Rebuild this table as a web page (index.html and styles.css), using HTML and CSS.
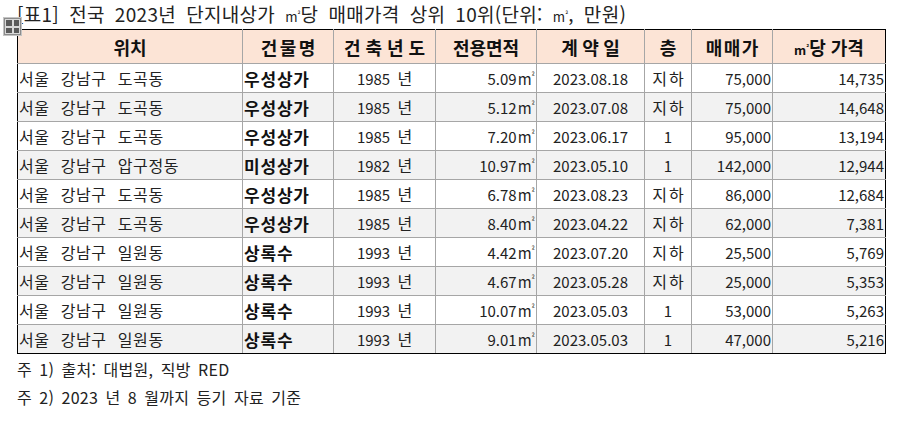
FILE: index.html
```html
<!DOCTYPE html>
<html lang="ko">
<head>
<meta charset="utf-8">
<link rel="stylesheet" href="styles.css">
</head>
<body>
<div class="page">
  <div class="title">[표1] 전국 2023년 단지내상가 <span class="unit">m<span class="sq">²</span></span>당 매매가격 상위 10위(단위: <span class="unit">m<span class="sq">²</span></span>, 만원)</div>
  <div class="table-wrap">
    <span class="handle"><i></i><i></i><i></i><i></i></span>
    <table class="data">
      <colgroup>
        <col class="c1"><col class="c2"><col class="c3"><col class="c4"><col class="c5"><col class="c6"><col class="c7"><col class="c8">
      </colgroup>
      <thead>
        <tr><th>위치</th><th class="s2">건물명</th><th class="s6">건축년도</th><th>전용면적</th><th class="s5">계약일</th><th>층</th><th class="s1">매매가</th><th><span class="hunit">m<span class="sq">²</span></span>당 가격</th></tr>
      </thead>
      <tbody>
        <tr><td class="l">서울 강남구 도곡동</td><td class="b">우성상가</td><td class="c">1985 <span class="k">년</span></td><td class="r">5.09<span class="dunit">m<span class="sq">²</span></span></td><td class="c">2023.08.18</td><td class="c k">지하</td><td class="r">75,000</td><td class="r">14,735</td></tr>
        <tr class="alt"><td class="l">서울 강남구 도곡동</td><td class="b">우성상가</td><td class="c">1985 <span class="k">년</span></td><td class="r">5.12<span class="dunit">m<span class="sq">²</span></span></td><td class="c">2023.07.08</td><td class="c k">지하</td><td class="r">75,000</td><td class="r">14,648</td></tr>
        <tr><td class="l">서울 강남구 도곡동</td><td class="b">우성상가</td><td class="c">1985 <span class="k">년</span></td><td class="r">7.20<span class="dunit">m<span class="sq">²</span></span></td><td class="c">2023.06.17</td><td class="c">1</td><td class="r">95,000</td><td class="r">13,194</td></tr>
        <tr class="alt"><td class="l">서울 강남구 압구정동</td><td class="b">미성상가</td><td class="c">1982 <span class="k">년</span></td><td class="r">10.97<span class="dunit">m<span class="sq">²</span></span></td><td class="c">2023.05.10</td><td class="c">1</td><td class="r">142,000</td><td class="r">12,944</td></tr>
        <tr><td class="l">서울 강남구 도곡동</td><td class="b">우성상가</td><td class="c">1985 <span class="k">년</span></td><td class="r">6.78<span class="dunit">m<span class="sq">²</span></span></td><td class="c">2023.08.23</td><td class="c k">지하</td><td class="r">86,000</td><td class="r">12,684</td></tr>
        <tr class="alt"><td class="l">서울 강남구 도곡동</td><td class="b">우성상가</td><td class="c">1985 <span class="k">년</span></td><td class="r">8.40<span class="dunit">m<span class="sq">²</span></span></td><td class="c">2023.04.22</td><td class="c k">지하</td><td class="r">62,000</td><td class="r">7,381</td></tr>
        <tr><td class="l">서울 강남구 일원동</td><td class="b">상록수</td><td class="c">1993 <span class="k">년</span></td><td class="r">4.42<span class="dunit">m<span class="sq">²</span></span></td><td class="c">2023.07.20</td><td class="c k">지하</td><td class="r">25,500</td><td class="r">5,769</td></tr>
        <tr class="alt"><td class="l">서울 강남구 일원동</td><td class="b">상록수</td><td class="c">1993 <span class="k">년</span></td><td class="r">4.67<span class="dunit">m<span class="sq">²</span></span></td><td class="c">2023.05.28</td><td class="c k">지하</td><td class="r">25,000</td><td class="r">5,353</td></tr>
        <tr><td class="l">서울 강남구 일원동</td><td class="b">상록수</td><td class="c">1993 <span class="k">년</span></td><td class="r">10.07<span class="dunit">m<span class="sq">²</span></span></td><td class="c">2023.05.03</td><td class="c">1</td><td class="r">53,000</td><td class="r">5,263</td></tr>
        <tr class="alt"><td class="l">서울 강남구 일원동</td><td class="b">상록수</td><td class="c">1993 <span class="k">년</span></td><td class="r">9.01<span class="dunit">m<span class="sq">²</span></span></td><td class="c">2023.05.03</td><td class="c">1</td><td class="r">47,000</td><td class="r">5,216</td></tr>
      </tbody>
    </table>
  </div>
  <p class="note">주 1) 출처: 대법원, 직방 RED</p>
  <p class="note">주 2) 2023 년 8 월까지 등기 자료 기준</p>
</div>
</body>
</html>
```

FILE: styles.css
```css
html, body {
  margin: 0;
  padding: 0;
  background: #ffffff;
}
body {
  font-family: "Noto Sans CJK KR", "Noto Sans", sans-serif;
  color: #1a1a1a;
}
.page {
  padding: 0 0 0 17px;
}
.title {
  height: 29px;
  line-height: 28px;
  font-size: 19px;
  letter-spacing: 0.3px;
  word-spacing: 4.5px;
  color: #222;
  white-space: nowrap;
}
.unit {
  font-size: 0.7em;
  letter-spacing: 0;
}
.hunit {
  font-size: 0.7em;
}
.dunit {
  font-size: 1em;
  margin-left: 1px;
}
.sq {
  font-size: 0.55em;
  vertical-align: 0.75em;
  line-height: 0;
}
.table-wrap {
  position: relative;
  width: 868px;
}
.handle {
  position: absolute;
  left: -14px;
  top: -12px;
  width: 19px;
  height: 19px;
  box-sizing: border-box;
  background: #8c8c8c;
  border: 1px solid #c4c4c4;
  display: grid;
  grid-template-columns: 1fr 1fr;
  grid-template-rows: 1fr 1fr;
  gap: 2px;
  padding: 2px;
}
.handle i {
  display: block;
  background: #5a5a5a;
  outline: 1px solid #d8d8d8;
}
.data {
  border-collapse: collapse;
  table-layout: fixed;
  width: 868px;
  border: 1px solid #000;
  font-size: 15px;
}
.c1 { width: 225px; }
.c2 { width: 91px; }
.c3 { width: 102px; }
.c4 { width: 101px; }
.c5 { width: 108px; }
.c6 { width: 47px; }
.c7 { width: 81px; }
.c8 { width: 113px; }
.data th {
  height: 33px;
  background: #fce4d6;
  font-weight: 700;
  font-size: 18px;
  color: #111;
  text-align: center;
  border: 1px solid #a6a6a6;
  border-top: 1px solid #000;
  padding: 0;
  white-space: nowrap;
}
.data th.s1 { letter-spacing: 1.5px; padding-left: 1.5px; }
.data th.s2 { letter-spacing: 2.5px; padding-left: 2.5px; }
.data th.s5 { letter-spacing: 4.5px; padding-left: 4.5px; }
.data th.s6 { letter-spacing: 5px; padding-left: 5px; }
.data td {
  height: 28px;
  border: 1px solid #a6a6a6;
  padding: 0 2px;
  white-space: nowrap;
  color: #222;
}
.data tr > :first-child { border-left: 1px solid #000; }
.data tr > :last-child { border-right: 1px solid #000; }
.data tbody tr:last-child td { border-bottom: 1px solid #000; }
.data tr.alt td { background: #f2f2f2; }
.data td.l {
  text-align: left;
  padding-left: 1px;
  font-size: 16px;
  letter-spacing: 0.6px;
  word-spacing: 6px;
}
.data td.b {
  text-align: left;
  font-weight: 700;
  padding-left: 1px;
  color: #111;
  font-size: 17px;
  letter-spacing: 0.8px;
}
.data td.c { text-align: center; word-spacing: 3px; }
.data td.k { font-size: 16px; letter-spacing: 2px; padding-left: 4px; }
.data td .k { font-size: 16px; }
.data td.r { text-align: right; padding-right: 1px; }
.note {
  margin: 0;
  font-size: 16px;
  letter-spacing: 0.3px;
  word-spacing: 2.5px;
  height: 28px;
  line-height: 28px;
  color: #222;
}
.note:first-of-type {
  margin-top: 1px;
}
```
